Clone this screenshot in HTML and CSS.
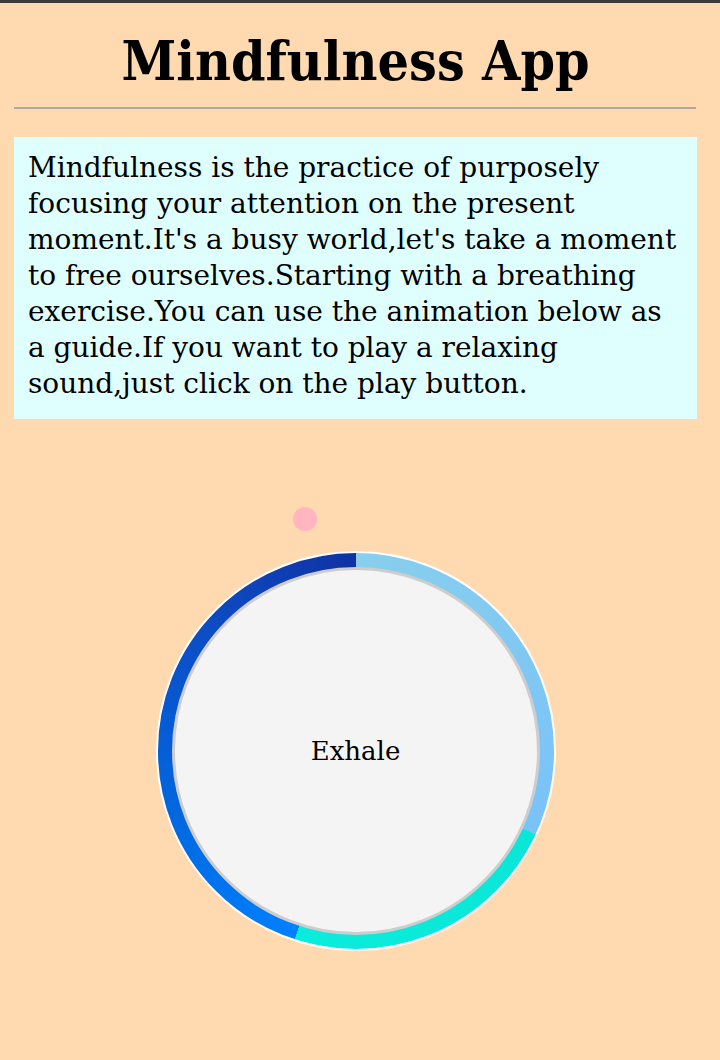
FILE: index.html
```html
<!DOCTYPE html>
<html lang="en">
<head>
<meta charset="utf-8">
<title>Mindfulness App</title>
<link rel="stylesheet" href="styles.css">
</head>
<body>
<div class="topbar"></div>
<main class="page">
  <h1 class="title">Mindfulness App</h1>
  <hr class="rule">
  <p class="intro">Mindfulness is the practice of purposely focusing your attention on the present moment.It's a busy world,let's take a moment to free ourselves.Starting with a breathing exercise.You can use the animation below as a guide.If you want to play a relaxing sound,just click on the play button.</p>
  <section class="breath">
    <div class="ring">
      <span class="dot"></span>
      <div class="inner">Exhale</div>
    </div>
  </section>
</main>
</body>
</html>
```

FILE: styles.css
```css
html, body {
  margin: 0;
  padding: 0;
  background: #ffdab0;
  height: 100%;
}

body {
  font-family: "DejaVu Serif", serif;
  color: #000;
}

.topbar {
  height: 3px;
  background: #3c3c3c;
}

.page {
  padding: 0 0 0 14px;
  width: 683px;
}

.title {
  margin: 28px 0 0 0;
  font-family: "DejaVu Serif Condensed", "DejaVu Serif", serif;
  font-stretch: condensed;
  font-weight: bold;
  font-size: 55px;
  line-height: 60px;
  text-align: center;
}

.rule {
  margin: 16px 0 0 0;
  height: 0;
  border: 0;
  border-top: 2px solid #b2aaa2;
  width: 682px;
}

.intro {
  margin: 28px 0 0 0;
  background: #dfffff;
  padding: 13px 14px 17px 14px;
  font-family: "DejaVu Serif", serif;
  font-size: 28px;
  line-height: 36px;
}

.breath {
  display: flex;
  justify-content: center;
  padding-top: 132px;
  width: 682px;
}

.ring {
  position: relative;
  width: 396px;
  height: 396px;
  border: 2px solid #ffffff;
  border-radius: 50%;
  background: conic-gradient(
    #88cfec 0deg,
    #79c2f9 115deg,
    #0ae6d7 115deg,
    #0aeddc 198deg,
    #0081ff 198deg,
    #0068e0 250deg,
    #0d4cc4 310deg,
    #1032a4 360deg
  );
  display: flex;
  align-items: center;
  justify-content: center;
  margin-left: 1px;
}

.inner {
  width: 362px;
  height: 362px;
  border-radius: 50%;
  background: #f4f4f4;
  border: 3px solid #cdcdcd;
  display: flex;
  align-items: center;
  justify-content: center;
  font-size: 26px;
}

.dot {
  position: absolute;
  left: 135px;
  top: -46px;
  width: 24px;
  height: 24px;
  border-radius: 50%;
  background: #ffb6c1;
}
```
